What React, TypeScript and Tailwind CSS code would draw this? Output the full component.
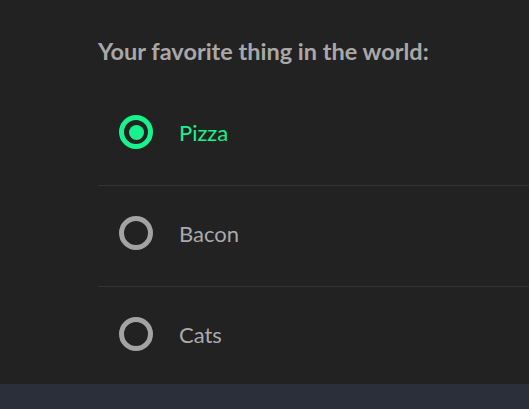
import React, { useState } from "react";

const options = ["Pizza", "Bacon", "Cats"];

export default function App() {
  const [selected, setSelected] = useState("Pizza");
  return (
    <div className="h-screen w-full flex flex-col bg-[#222222] font-['Lato','Liberation_Sans',sans-serif] overflow-hidden">
      <div className="h-[384px] shrink-0 pl-[98px] pt-[37px] overflow-hidden">
        <h2 className="text-[23.5px] leading-[28px] font-bold text-[#a8a8a8] h-[48px]">
          Your favorite thing in the world:
        </h2>
        <ul className="flex flex-col">
          {options.map((o, i) => {
            const active = o === selected;
            return (
              <li
                key={o}
                onClick={() => setSelected(o)}
                className={`h-[101px] shrink-0 pt-[30px] pl-[21px] flex items-start cursor-pointer ${
                  i < options.length - 1 ? "border-b border-[#333333]" : ""
                }`}
              >
                <div className="flex items-center gap-[26px]">
                  <span
                    className={`w-[34px] h-[34px] rounded-full border-[5px] flex items-center justify-center ${
                      active ? "border-[#17f28c]" : "border-[#a3a3a3]"
                    }`}
                  >
                    {active && <span className="w-[15px] h-[15px] rounded-full bg-[#17f28c]" />}
                  </span>
                  <span className={`text-[22px] leading-[26px] pt-[2px] ${active ? "text-[#17f28c]" : "text-[#a8aaad]"}`}>
                    {o}
                  </span>
                </div>
              </li>
            );
          })}
        </ul>
      </div>
      <div className="flex-1 bg-[#2b2f3a]" />
    </div>
  );
}
